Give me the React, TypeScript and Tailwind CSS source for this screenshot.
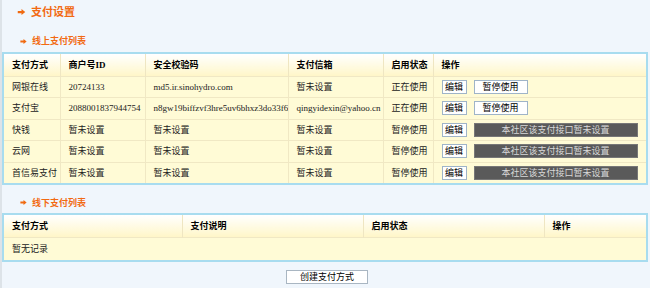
import React from "react";

const font = { fontFamily: '"Liberation Serif", "Noto Sans CJK SC", serif' };

const Arrow = ({ className = "" }: { className?: string }) => (
  <svg viewBox="0 0 10 8" className={className} fill="#f06a10">
    <path d="M0 2.5h5V0l5 4-5 4V5.5H0z" />
  </svg>
);

const online = [
  { name: "网银在线", id: "20724133", key: "md5.ir.sinohydro.com", mail: "暂未设置", state: "正在使用", on: true },
  { name: "支付宝", id: "2088001837944754", key: "n8gw19biffzvf3hre5uv6bhxz3do33f6", mail: "qingyidexin@yahoo.cn", state: "正在使用", on: true },
  { name: "快钱", id: "暂未设置", key: "暂未设置", mail: "暂未设置", state: "暂停使用", on: false },
  { name: "云网", id: "暂未设置", key: "暂未设置", mail: "暂未设置", state: "暂停使用", on: false },
  { name: "首信易支付", id: "暂未设置", key: "暂未设置", mail: "暂未设置", state: "暂停使用", on: false },
];

const th = "h-[23px] p-0 pl-[8px] text-left font-bold text-[9px] leading-[12px] text-black border-r border-[#efe6c2] last:border-r-0 bg-gradient-to-b from-white to-[#fff6c8] whitespace-nowrap";
const td = "h-[21.5px] p-0 pl-[8px] text-[9px] leading-[12px] text-[#222] border-r border-t border-[#f0e8c4] last:border-r-0 whitespace-nowrap overflow-hidden";

const SectionTitle = ({ text }: { text: string }) => (
  <div className="flex items-center gap-[5px] pl-[18px] h-[12px] text-[9px] leading-[12px] font-bold text-[#f26a12]">
    <Arrow className="w-[7px] h-[5px]" />
    {text}
  </div>
);

export default function App() {
  return (
    <div className="w-[650px] h-[288px] bg-[#f0f6fc] border-l-2 border-[#dde3e8] overflow-hidden" style={font}>
      <div className="flex items-center gap-[5px] pl-[15px] pt-[5px] h-[19px] text-[11px] leading-[14px] font-bold text-[#f26a12]">
        <Arrow className="w-[9px] h-[6px]" />
        支付设置
      </div>

      <div className="mt-[16px]">
        <SectionTitle text="线上支付列表" />
      </div>

      <table className="mt-[5px] w-[646px] border-collapse border-2 border-[#a8dcef] bg-[#fffbd6] table-fixed">
        <colgroup>
          <col className="w-[57px]" />
          <col className="w-[85px]" />
          <col className="w-[143px]" />
          <col className="w-[95px]" />
          <col className="w-[50px]" />
          <col />
        </colgroup>
        <thead>
          <tr>
            <th className={th}>支付方式</th>
            <th className={th}>商户号ID</th>
            <th className={th}>安全校验码</th>
            <th className={th}>支付信箱</th>
            <th className={th}>启用状态</th>
            <th className={th}>操作</th>
          </tr>
        </thead>
        <tbody>
          {online.map((r) => (
            <tr key={r.name}>
              <td className={td}>{r.name}</td>
              <td className={td}>{r.id}</td>
              <td className={td}>{r.key}</td>
              <td className={td}>{r.mail}</td>
              <td className={td}>{r.state}</td>
              <td className={td}>
                <div className="flex items-center gap-[7px]">
                  <button className="h-[14px] w-[25px] border border-[#9fb4c8] bg-white text-[9px] leading-[12px] text-black">编辑</button>
                  {r.on ? (
                    <button className="h-[14px] w-[54px] border border-[#9fb4c8] bg-white text-[9px] leading-[12px] text-black">暂停使用</button>
                  ) : (
                    <div className="h-[14px] w-[164px] bg-[#5a5a5a] border border-[#777] text-center text-[9px] leading-[12px] text-[#d8d8d8]">本社区该支付接口暂未设置</div>
                  )}
                </div>
              </td>
            </tr>
          ))}
        </tbody>
      </table>

      <div className="mt-[12px]">
        <SectionTitle text="线下支付列表" />
      </div>

      <table className="mt-[4px] w-[646px] border-collapse border-2 border-[#a8dcef] bg-[#fffbd6] table-fixed">
        <colgroup>
          <col className="w-[179px]" />
          <col className="w-[181px]" />
          <col className="w-[181px]" />
          <col />
        </colgroup>
        <thead>
          <tr>
            <th className={`${th} h-[24px]`}>支付方式</th>
            <th className={`${th} h-[24px]`}>支付说明</th>
            <th className={`${th} h-[24px]`}>启用状态</th>
            <th className={`${th} h-[24px]`}>操作</th>
          </tr>
        </thead>
        <tbody>
          <tr>
            <td colSpan={4} className={`${td} h-[23px]`}>暂无记录</td>
          </tr>
        </tbody>
      </table>

      <div className="flex justify-center mt-[8px] pl-[2px]">
        <button className="h-[14px] w-[82px] border border-[#a9b6c2] bg-white text-[9px] leading-[12px] text-black">创建支付方式</button>
      </div>
    </div>
  );
}
